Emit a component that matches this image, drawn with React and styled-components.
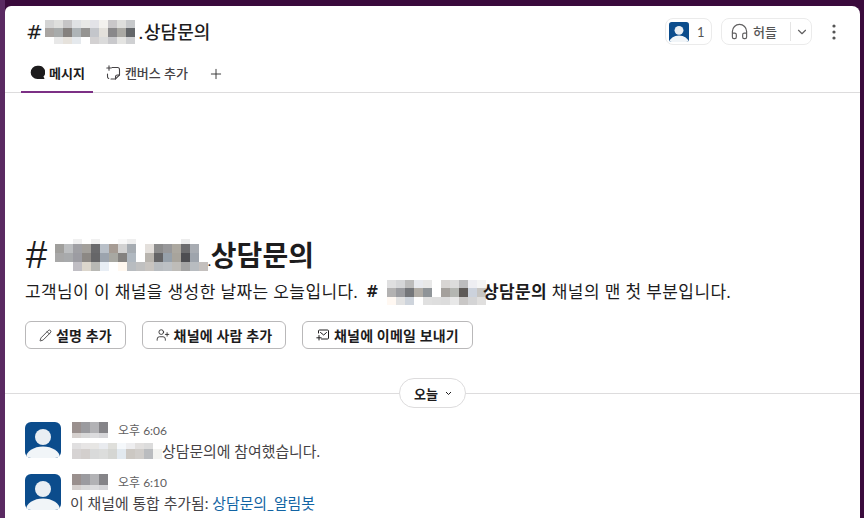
import React from "react";
import styled, { createGlobalStyle } from "styled-components";
import { Headphones, ChevronDown, Plus, Pencil, UserPlus } from "lucide-react";

const FONT = `Lato, "Noto Sans CJK KR", sans-serif`;

const Global = createGlobalStyle`
  html, body { margin: 0; padding: 0; height: 100%; overflow: hidden; background: #3f0e40; }
  * { box-sizing: border-box; }
  #root { height: 100%; }
`;

const Frame = styled.div`
  width: 864px; height: 518px; overflow: hidden;
  padding: 6px 4px 0 5px;
  background: linear-gradient(90deg, #5a2a62 0, #5a2a62 5px, #3a0a3c 5px);
  font-family: ${FONT};
  color: #1d1c1d;
`;
const Panel = styled.main`
  height: 512px; background: #fff; border-radius: 6px 8px 0 0; overflow: hidden;
  display: flex; flex-direction: column;
`;
const Header = styled.header`
  height: 87px; flex: none; border-bottom: 1px solid #dddcdd;
  display: flex; flex-direction: column;
`;
const TitleRow = styled.div`
  height: 51px; padding: 0 24px 0 21px; display: flex; align-items: center; justify-content: space-between;
`;
const Title = styled.h1`
  margin: 0; display: flex; align-items: center; font-size: 18px; font-weight: 500; line-height: 24px;
`;
const Hash = styled.span`margin-right: 2px; font-size: 20px; font-family: "DejaVu Sans", sans-serif; font-weight: 400;`;
const Dot = styled.span`margin: 0 1px 0 4px;`;
const BigDot = styled.span`font-size: 12px; line-height: 12px; align-self: flex-end; margin-bottom: 7px; margin-right: 0;`;
const Actions = styled.div`display: flex; align-items: center;`;
const MemberPill = styled.div`
  width: 47px; height: 27px; border: 1px solid #ebebeb; border-radius: 8px; padding-left: 3px;
  display: flex; align-items: center; gap: 8px; font-size: 13px; color: #555;
`;
const HuddlePill = styled.div`
  width: 91px; height: 27px; margin-left: 9px; border: 1px solid #ebebeb; border-radius: 8px;
  display: flex; align-items: center; font-size: 13px; font-weight: 500; color: #555;
  padding-left: 8px; gap: 4px;
`;
const Sep = styled.span`width: 1px; height: 19px; background: #e4e4e4; margin-left: 9px;`;
const More = styled.svg`margin-left: 20px;`;
const TabRow = styled.nav`flex: 1; display: flex; padding-left: 16px; align-items: stretch;`;
const Tab = styled.div`
  display: flex; align-items: center; gap: 4px; padding: 0 8px 3px 9px; font-size: 13px;
  font-weight: ${p => (p.$active ? 700 : 500)};
  margin-left: ${p => p.$ml || 0}px;
  color: ${p => (p.$active ? "#1d1c1d" : "#454245")};
  border-bottom: 2px solid ${p => (p.$active ? "#7c3085" : "transparent")};
  margin-bottom: -1px;
`;
const PlusBox = styled.div`display: flex; align-items: center; padding: 0 0 2px 12px; color: #333;`;
const Intro = styled.section`padding: 142px 0 0 20px; flex: none;`;
const BigTitle = styled.h2`
  margin: 0; display: flex; align-items: center; font-size: 28px; line-height: 40px; font-weight: 700; height: 40px;
`;
const BigHash = styled.span`font-family: "Liberation Sans", sans-serif; font-size: 38px; font-weight: 400; margin: 0 8px 0 1px; width: 21px;`;
const IntroText = styled.p`
  margin: 5px 0 0; height: 24px; display: flex; align-items: center; font-size: 17px; line-height: 24px; white-space: pre;
  letter-spacing: 0.4px;
`;
const IntroHash = styled.strong`font-family: "DejaVu Sans", sans-serif; font-size: 15px; font-weight: 700; margin: 0 8px 0 8px;`;
const Strong = styled.strong`font-weight: 700; margin-left: -3px;`;
const Buttons = styled.div`display: flex; gap: 16px; margin-top: 17px;`;
const Button = styled.button`
  height: 28px; width: ${p => p.$w}px; border: 1px solid #b9b8b9; border-radius: 6px; background: #fff;
  font: 700 14px ${FONT}; letter-spacing: 0.2px; color: #1d1c1d; padding: 0; display: flex; align-items: center; justify-content: center; gap: 4px;
`;
const Divider = styled.div`
  height: 30px; margin-top: 29px; flex: none; display: flex; align-items: center; justify-content: center;
  background: linear-gradient(#dddcdd, #dddcdd) center / 100% 1px no-repeat;
  padding-right: 1px;
`;
const Pill = styled.div`
  width: 67px; height: 30px; background: #fff; border: 1px solid #dddcdd; border-radius: 15px;
  display: flex; align-items: center; justify-content: center; gap: 7px; font-size: 13px; font-weight: 700; padding-left: 2px;
`;
const Messages = styled.section`padding: 14px 0 0 20px; display: flex; flex-direction: column; gap: 16px;`;
const Message = styled.article`display: grid; grid-template-columns: 36px 1fr; column-gap: 11px; height: 36px;`;
const Meta = styled.div`display: flex; align-items: flex-start; height: 19px;`;
const Time = styled.span`margin-left: 10px; font-size: 12px; line-height: 17px; color: #616061;`;
const Body = styled.div`
  display: flex; align-items: center; height: 20px; font-size: 14.9px; line-height: 20px; color: #454245; white-space: pre;
  margin-left: ${p => p.$ml || 0}px;
`;
const LinkText = styled.span`color: #1264a3;`;

const Mosaic = ({ cw, rows }) => {
  const tallest = rows.reduce((s, r) => s + r.h, 0);
  const cols = Math.max(...rows.map(r => r.c.length));
  let y = 0;
  return (
    <svg width={cw * cols} height={tallest} shapeRendering="crispEdges" aria-hidden="true">
      {rows.map((r, i) => {
        const top = y;
        y += r.h;
        return r.c.map((c, j) => <rect key={`${i}-${j}`} x={j * cw} y={top} width={cw} height={r.h} fill={`#${c}`} />);
      })}
    </svg>
  );
};

const titleMosaic = [
  { h: 8, c: "d4d4d4 dfdfdd c6c5c6 e0e2e4 e9e9e7 e3e3e8 f3f1ee c9c7c9 dededc c6c8ca".split(" ") },
  { h: 9, c: "a9a5a2 a8abab 85817e aeb4b7 959492 c4c6cb e3e0db 89888a aaa9a4 636669".split(" ") },
  { h: 7, c: "ffffff e8e8e8 e6e2dc e5e9ed ffffff d3d1d2 dbdbdb c9c9cc e4e4e2 cfd0d2".split(" ") },
];
const bigMosaic = [
  { h: 5, c: "ffffff ffffff f0f0f0 ffffff f0f0f0 ffffff ffffff f8f8f8 eeeeee ffffff ffffff ffffff ffffff ffffff ececec ffffff ffffff".split(" ") },
  { h: 9, c: "a09f9c bcbec0 a0a0a4 a3a09b 6a6a6c b9c0c8 a69c94 d2d2d2 a6acb2 ffffff e4e0dc 8c8c8c 98989a aca8a0 6c6c6e a8acb2 ffffff".split(" ") },
  { h: 9, c: "a8a8a8 a8aaac 9c9ca2 8c8884 666668 9ca4ae a8a8a2 848280 b0b8c0 ffffff b8b4ae 646466 96a0aa a8a49c 4e4e52 9ea4ac ffffff".split(" ") },
  { h: 9, c: "ffffff ffffff c0bec4 dcd6cc b8b8b4 e8eef5 ffffff fff8f0 b8bcc0 c0c0c0 c8c4c0 b8bcc0 bcc0c4 bebcb8 a4a4a4 b8bcc0 c4c0be".split(" ") },
];
const introMosaic = [
  { h: 8, c: "dfdfe0 d5d6d8 bcbcbc e8eaef e8e8e8 ffffff d8d5d3 dcdcdc bcbcbe eeeef2 f5f5f5".split(" ") },
  { h: 9, c: "b3b2b2 9b9ca0 74767a b0aca6 8f9498 ffffff a4a09c b4b6b2 5e5a58 ccd2dc c7c5c2".split(" ") },
  { h: 8, c: "fff8f2 e2e2e2 ced4dc ffffff e0e0e0 dedede dcdcdc e8e8e8 c9c7c6 d4d4d5 e0dfde".split(" ") },
];
const nameMosaic = [
  { h: 11, c: "9a908e 9b9b9f b2b2b5 858488".split(" ") },
  { h: 5, c: "d5d0ce d8d8d8 dcdcde d5d5d8".split(" ") },
];
const bodyMosaic = [
  { h: 6, c: "e0dfe0 e7e5e5 e7e6e4 e9ebef dfdfdb f5f8fb eeeef0 e2e0df dcdcdc ffffff".split(" ") },
  { h: 10, c: "d6d3d3 d3cfcd d9dada dcdddc d5d6d3 e2e9ef ccc8c3 d0cdca babcbf f3f3f0".split(" ") },
];

const Avatar = ({ size, radius }) => (
  <svg width={size} height={size} viewBox="0 0 36 36" aria-hidden="true">
    <defs>
      <clipPath id={`av${size}`}><rect width="36" height="36" rx={radius} /></clipPath>
    </defs>
    <g clipPath={`url(#av${size})`}>
      <rect width="36" height="36" fill="#0b4c8c" />
      <circle cx="18" cy="15" r="8" fill="#e9eef3" />
      <ellipse cx="18" cy="36" rx="17" ry="11.5" fill="#f1f5f8" />
    </g>
  </svg>
);

const MessageIcon = () => (
  <svg width="15" height="15" viewBox="0 0 15 15" aria-hidden="true">
    <path d="M7.3.8a6.6 6.6 0 1 0 0 13.2h6.6c.5 0 .7-.5.4-.9l-.9-1.3A6.6 6.6 0 0 0 7.3.8z" fill="#1d1c1d" />
  </svg>
);
const CanvasIcon = () => (
  <svg width="15" height="16" viewBox="0 0 15 16" fill="none" stroke="#454245" strokeWidth="1.1" strokeLinecap="round" aria-hidden="true">
    <path d="M6 2.5h5.5a2 2 0 0 1 2 2v5.5l-4 4H5" />
    <path d="M9.5 14v-2a2 2 0 0 1 2-2h2" />
    <path d="M1.5 9v2.5a2 2 0 0 0 1.2 2" />
    <path d="M3 .8v4.4M.8 3h4.4" />
  </svg>
);
const MailIcon = () => (
  <svg width="14" height="14" viewBox="0 0 14 14" fill="none" stroke="#1d1c1d" strokeWidth="1" strokeLinecap="round" strokeLinejoin="round" aria-hidden="true">
    <path d="M2.5 5V3a1 1 0 0 1 1-1h8a1 1 0 0 1 1 1v7a1 1 0 0 1-1 1H5.5" />
    <path d="M4.5 4.5 7.7 7l2.8-2.5" />
    <path d="M3 7.5v4.5M.8 9.8h4.4" />
  </svg>
);

const Caret = () => (
  <svg width="7" height="5" viewBox="0 0 7 5" fill="none" stroke="#1d1c1d" strokeWidth="1" aria-hidden="true">
    <path d="M1 1l2.5 2.5L6 1" />
  </svg>
);

export default function App() {
  return (
    <>
      <Global />
      <Frame>
        <Panel>
          <Header>
            <TitleRow>
              <Title>
                <Hash>#</Hash>
                <Mosaic cw={9} rows={titleMosaic} />
                <Dot>.</Dot>상담문의
              </Title>
              <Actions>
                <MemberPill><Avatar size={20} radius={5} />1</MemberPill>
                <HuddlePill>
                  <Headphones size={19} strokeWidth={1.5} color="#616061" />
                  허들
                  <Sep />
                  <ChevronDown size={14} color="#616061" />
                </HuddlePill>
                <More width="4" height="16" viewBox="0 0 4 16" aria-hidden="true">
                  <circle cx="2" cy="2" r="1.6" fill="#555" />
                  <circle cx="2" cy="8" r="1.6" fill="#555" />
                  <circle cx="2" cy="14" r="1.6" fill="#555" />
                </More>
              </Actions>
            </TitleRow>
            <TabRow>
              <Tab $active><MessageIcon />메시지</Tab>
              <Tab $ml={4}><CanvasIcon />캔버스 추가</Tab>
              <PlusBox><Plus size={16} strokeWidth={1.4} /></PlusBox>
            </TabRow>
          </Header>
          <Intro>
            <BigTitle>
              <BigHash>#</BigHash>
              <Mosaic cw={9} rows={bigMosaic} />
              <BigDot>.</BigDot>상담문의
            </BigTitle>
            <IntroText>
              고객님이 이 채널을 생성한 날짜는 오늘입니다.<IntroHash>#</IntroHash>
              <Mosaic cw={9} rows={introMosaic} />
              <Strong>상담문의</Strong> 채널의 맨 첫 부분입니다.
            </IntroText>
            <Buttons>
              <Button $w={101}><Pencil size={13} strokeWidth={1.4} />설명 추가</Button>
              <Button $w={144}><UserPlus size={14} strokeWidth={1.4} />채널에 사람 추가</Button>
              <Button $w={171}><MailIcon />채널에 이메일 보내기</Button>
            </Buttons>
          </Intro>
          <Divider><Pill>오늘<Caret /></Pill></Divider>
          <Messages>
            <Message>
              <Avatar size={36} radius={6} />
              <div>
                <Meta><Mosaic cw={9} rows={nameMosaic} /><Time>오후 6:06</Time></Meta>
                <Body><Mosaic cw={9} rows={bodyMosaic} />상담문의에 참여했습니다.</Body>
              </div>
            </Message>
            <Message>
              <Avatar size={36} radius={6} />
              <div>
                <Meta><Mosaic cw={9} rows={nameMosaic} /><Time>오후 6:10</Time></Meta>
                <Body $ml={-2}>이 채널에 통합 추가됨: <LinkText>상담문의_알림봇</LinkText></Body>
              </div>
            </Message>
          </Messages>
        </Panel>
      </Frame>
    </>
  );
}
